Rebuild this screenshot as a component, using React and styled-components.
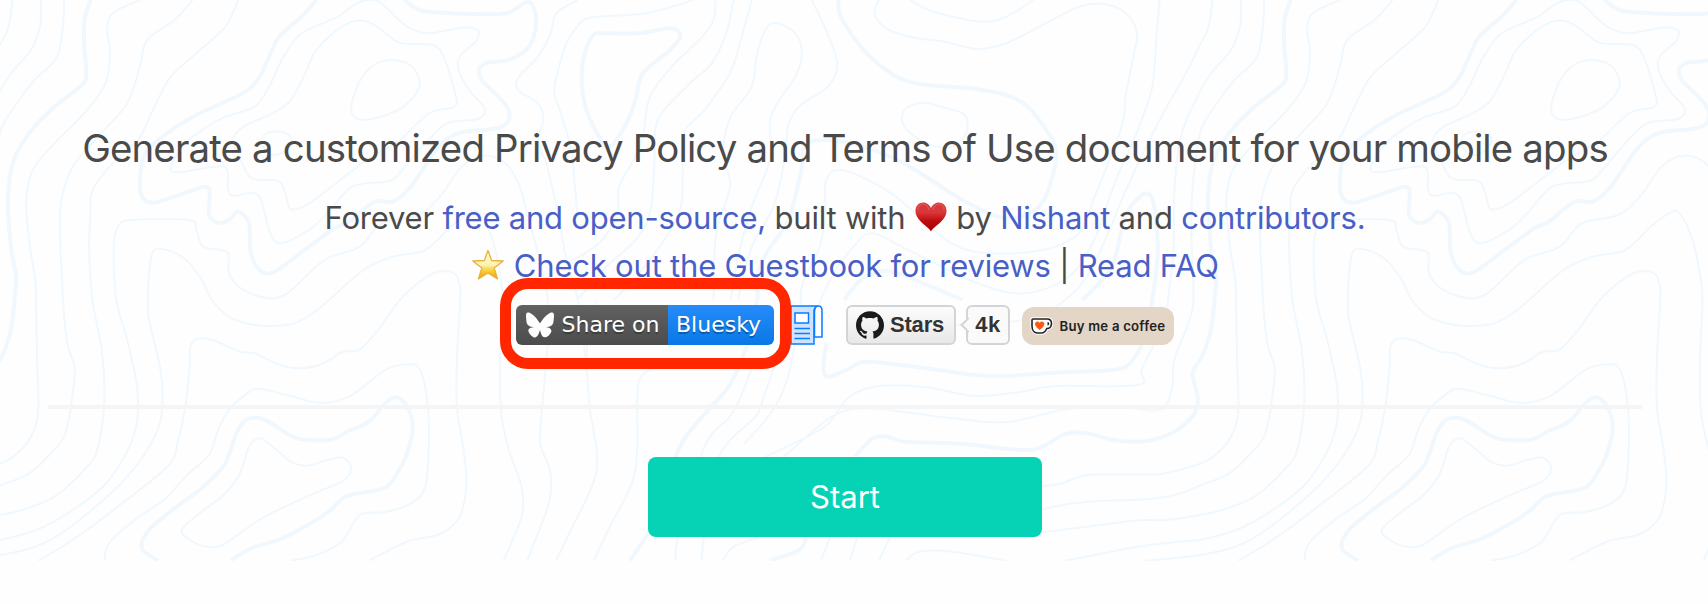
import React from 'react';
import styled, { createGlobalStyle, css } from 'styled-components';
import { FaBluesky } from 'react-icons/fa6';
import { SiGithub } from 'react-icons/si';

const GlobalStyle = createGlobalStyle`
  * { box-sizing: border-box; }
  body { margin: 0; background: #fefefe; }
`;

/* Contour lines of the topographic backdrop. Each line: [thick, closed, x, y, x, y, ...] */
const CONTOURS = [
  [0, 0, 3335, 0, 3325, 80, 3301, 135, 3262, 220, 3195, 350, 3140, 470, 3090, 590, 3040, 720, 2990, 830, 2930, 900, 2850, 950, 2700, 975, 2560, 970, 2440, 945],
  [0, 0, 113, 0, 110, 80, 85, 150, 30, 220, 0, 275, -50, 400, -70, 560, -73, 750, -88, 900, -95, 950, -126, 1030, -161, 1110, -171, 1155, -400, 1158, -490, 1175, -620, 1188, -750, 1162, -880, 1158, -965, 1190, -1033, 1280, -1195, 1370],
  [0, 0, 177, 0, 172, 90, 155, 175, 95, 240, 40, 320, 0, 400, -20, 560, -24, 700, -18, 900, -36, 980, -71, 1080, -76, 1160, -96, 1220, -131, 1232, -171, 1226, -240, 1222, -370, 1228, -530, 1266, -680, 1255, -820, 1235, -920, 1225, -1013, 1250, -1145, 1370],
  [1, 0, 250, 0, 234, 50, 231, 120, 237, 220, 225, 255, 150, 320, 80, 400, 35, 490, 22, 600, 30, 740, 44, 830, 40, 900, 28, 1000, 5, 1070, -20, 1120, -6, 1195, -18, 1245, -71, 1295, -131, 1320, -171, 1325, -240, 1320, -310, 1300, -370, 1302, -433, 1340, -490, 1350, -650, 1332, -810, 1325, -860, 1310, -900, 1315, -950, 1370],
  [0, 0, 385, 0, 310, 40, 295, 90, 303, 160, 290, 250, 240, 330, 150, 430, 90, 510, 72, 600, 80, 720, 97, 840, 99, 900, 102, 1080, 105, 1230, 85, 1310, 30, 1375, -40, 1405, -110, 1422, -171, 1423, -310, 1425, -380, 1450, -435, 1460],
  [0, 0, 530, 0, 480, 60, 405, 120, 385, 200, 350, 310, 270, 410, 200, 500, 169, 600, 165, 700, 171, 850, 173, 900, 185, 1030, 205, 1100, 200, 1180, 180, 1300, 140, 1360, 80, 1420, 0, 1457, -80, 1488, -171, 1499, -260, 1502, -350, 1510, -435, 1528],
  [0, 0, 655, 0, 620, 80, 540, 160, 470, 230, 425, 320, 380, 420, 310, 490, 255, 570, 249, 640, 245, 740, 254, 900, 280, 1050, 287, 1200, 270, 1340, 240, 1400, 150, 1490, 60, 1530, 0, 1545, -90, 1560, -171, 1561, -310, 1580, -440, 1598],
  [0, 0, 2930, 1682, 2980, 1672, 3130, 1640, 3220, 1628, 3301, 1620],
  [0, 0, 0, 1620, 100, 1590, 200, 1530, 300, 1440, 370, 1300, 378, 1170, 350, 1020, 320, 900, 313, 740, 325, 680, 360, 660, 520, 660, 540, 690, 560, 740, 625, 757, 630, 820, 670, 870, 740, 895, 790, 880, 850, 820, 900, 775, 990, 740, 1050, 670, 1150, 645, 1210, 590, 1270, 500, 1330, 467, 1390, 490, 1430, 560, 1450, 640, 1475, 740, 1507, 900, 1507, 1020, 1492, 1220, 1486, 1330, 1513, 1410, 1512, 1500, 1480, 1600, 1450, 1682],
  [0, 0, -150, 1682, 0, 1665, 120, 1630, 230, 1550, 350, 1430, 430, 1300, 447, 1200, 440, 1100, 410, 960, 407, 900, 410, 820, 420, 757, 445, 747, 500, 770, 550, 830, 583, 900, 630, 950, 700, 975, 800, 973, 860, 940, 905, 900, 1000, 810, 1080, 770, 1170, 750, 1240, 680, 1290, 640, 1320, 640, 1355, 720, 1375, 820, 1382, 900, 1375, 1100, 1380, 1250, 1400, 1350, 1435, 1460, 1437, 1540, 1410, 1620, 1385, 1682],
  [0, 0, 105, 1682, 200, 1620, 300, 1540, 460, 1400, 490, 1320, 510, 1220, 522, 1100, 525, 1035, 545, 1016, 590, 1022, 660, 1055, 700, 1060, 770, 1095, 830, 1105, 890, 1090, 940, 1057, 990, 1048, 1040, 990, 1100, 900, 1150, 850, 1200, 817, 1250, 820, 1265, 860, 1266, 900, 1257, 1080, 1257, 1220, 1275, 1350, 1283, 1450, 1265, 1550, 1210, 1602, 1120, 1625, 1015, 1682],
  [0, 0, 287, 1682, 300, 1630, 370, 1560, 450, 1500, 520, 1420, 575, 1365, 600, 1290, 630, 1230, 680, 1180, 715, 1167, 790, 1185, 880, 1209, 960, 1190, 1060, 1110, 1120, 1093, 1155, 1108, 1175, 1200, 1180, 1320, 1170, 1460, 1130, 1510, 1060, 1536, 990, 1545, 940, 1625, 870, 1665, 800, 1682],
  [1, 0, 435, 1682, 390, 1645, 410, 1590, 480, 1525, 560, 1460, 620, 1390, 650, 1300, 680, 1258, 730, 1260, 800, 1307, 840, 1319, 910, 1319, 960, 1292, 1015, 1265, 1060, 1210, 1090, 1192, 1120, 1220, 1136, 1280, 1120, 1360, 1095, 1415, 1065, 1460, 1030, 1472, 950, 1490, 910, 1530, 850, 1573, 770, 1618, 690, 1645, 635, 1682],
  [0, 1, 715, 1315, 750, 1340, 800, 1385, 845, 1397, 900, 1380, 945, 1373, 966, 1408, 940, 1445, 860, 1482, 720, 1555, 620, 1630, 575, 1641, 530, 1625, 500, 1590, 550, 1540, 620, 1480, 660, 1420, 685, 1340],
  [1, 0, 870, 0, 830, 50, 765, 115, 720, 220, 685, 268, 630, 300, 540, 345, 460, 400, 400, 460, 385, 540, 392, 592, 420, 608, 480, 590, 565, 560, 577, 590, 575, 645, 600, 668, 630, 660, 655, 635, 685, 670, 690, 760, 720, 815, 760, 812, 850, 740, 920, 685, 960, 665, 1030, 605, 1080, 605, 1130, 560, 1200, 450, 1260, 400, 1375, 382, 1402, 345, 1380, 300, 1325, 240, 1320, 205, 1345, 187, 1400, 180, 1455, 140, 1475, 70, 1465, 15, 1445, 8, 1400, 38, 1340, 43, 1200, 37, 1150, 28, 1112, 0],
  [0, 1, 930, 50, 980, 10, 1030, 0, 1060, 20, 1120, 80, 1180, 100, 1270, 83, 1315, 92, 1308, 125, 1265, 170, 1262, 210, 1290, 270, 1333, 325, 1315, 357, 1230, 370, 1170, 430, 1090, 530, 1060, 545, 970, 560, 900, 640, 850, 690, 770, 730, 740, 690, 710, 585, 640, 587, 627, 560, 625, 508, 590, 500, 490, 517, 470, 500, 510, 430, 570, 380, 620, 350, 700, 320, 740, 260, 780, 170, 830, 100],
  [0, 1, 1000, 62, 940, 80, 870, 150, 840, 220, 800, 300, 750, 340, 670, 380, 640, 420, 655, 460, 690, 533, 765, 543, 785, 580, 800, 627, 850, 610, 930, 545, 1010, 480, 1100, 420, 1180, 340, 1250, 320, 1252, 280, 1220, 170, 1190, 135, 1100, 128, 1050, 90],
  [0, 1, 1080, 180, 1130, 197, 1155, 245, 1138, 290, 1090, 333, 1010, 359, 970, 345, 970, 300, 1000, 225, 1040, 188],
  [0, 1, 720, 418, 740, 397, 780, 397, 803, 420, 780, 455, 750, 465, 727, 448],
  [0, 0, 1590, 0, 1530, 40, 1515, 100, 1480, 170, 1425, 235, 1427, 272, 1480, 310, 1495, 360, 1480, 420, 1505, 500, 1535, 640, 1560, 790, 1590, 900, 1613, 1100, 1623, 1230, 1643, 1370, 1628, 1460, 1568, 1595, 1530, 1682],
  [0, 0, 1908, 0, 1778, 40, 1628, 52, 1588, 80, 1555, 140, 1525, 265, 1540, 330, 1570, 440, 1580, 540, 1588, 640],
  [1, 1, 1628, 110, 1668, 100, 1758, 100, 1848, 85, 1871, 110, 1838, 155, 1768, 220, 1748, 300, 1723, 370, 1678, 440, 1648, 410, 1608, 310, 1602, 200],
  [0, 0, 1968, 0, 1963, 60, 1928, 115, 1848, 200, 1788, 290, 1770, 400, 1748, 470, 1703, 560, 1698, 640, 1648, 730, 1568, 785],
  [0, 0, 2018, 0, 1998, 100, 1958, 190, 1898, 250, 1810, 360, 1800, 500, 1788, 640, 1748, 720, 1668, 800, 1588, 900],
  [0, 0, 2068, 0, 2038, 120, 2008, 220, 1938, 330, 1880, 400, 1878, 520, 1868, 640, 1788, 780, 1690, 900],
  [0, 0, 1963, 900, 1970, 700, 2008, 560, 1990, 450, 2010, 350, 2068, 260, 2083, 160, 2108, 85, 2138, 70, 2188, 100, 2206, 160, 2188, 230, 2138, 310, 2118, 370, 2118, 480, 2068, 620, 2033, 760, 2010, 900],
  [0, 0, 2233, 0, 2268, 80, 2303, 190, 2278, 260, 2208, 310, 2170, 370, 2158, 480, 2128, 620, 2068, 740, 2030, 900],
  [1, 0, 2306, 0, 2313, 50, 2368, 140, 2438, 210, 2518, 250, 2668, 265, 2768, 285, 2828, 320, 2878, 390, 2903, 440, 2898, 520, 2858, 620, 2768, 655, 2648, 600, 2518, 510, 2438, 465, 2318, 425, 2220, 430, 2203, 520, 2168, 660, 2108, 760, 2083, 830, 2083, 900, 2060, 1020, 2028, 1110, 1998, 1170, 1908, 1280, 1858, 1370, 1808, 1550, 1733, 1682],
  [0, 1, 2538, 308, 2588, 320, 2653, 345, 2658, 400, 2618, 440, 2548, 430, 2488, 380, 2488, 330],
  [0, 0, 2418, 0, 2406, 40, 2438, 85, 2508, 112, 2598, 125, 2688, 147, 2768, 130, 2868, 75, 2968, 20, 3038, 12, 3098, 40, 3128, 100, 3118, 170, 3098, 280, 3088, 370, 3048, 490, 3008, 600, 2968, 700, 2868, 750, 2718, 760, 2618, 730, 2518, 640, 2438, 570, 2318, 510, 2273, 540, 2270, 640, 2255, 740, 2208, 850, 2200, 940, 2168, 1130, 2120, 1240, 2048, 1330],
  [0, 0, 2503, 0, 2568, 35, 2698, 65, 2768, 50, 2843, 0],
  [0, 0, 3190, 0, 3180, 130, 3170, 260, 3130, 390, 3070, 540, 3010, 720, 2940, 830, 2820, 880, 2690, 850, 2490, 745, 2398, 700, 2348, 740, 2288, 830, 2250, 920],
  [1, 0, 2323, 900, 2368, 840, 2438, 812, 2518, 840, 2648, 900],
  [1, 0, 2978, 900, 3058, 800, 3095, 650, 3135, 590, 3160, 582, 3175, 620, 3185, 750, 3170, 900, 3150, 1010, 3108, 1090, 3058, 1110, 2898, 1118, 2718, 1128, 2548, 1105, 2388, 1085, 2338, 1105, 2283, 1130, 2265, 1110, 2273, 1030],
  [0, 0, 1613, 1100, 1618, 1010, 1640, 900],
  [0, 0, 1808, 1100, 1763, 1130, 1753, 1200, 1753, 1350, 1738, 1450, 1678, 1580, 1633, 1682],
  [0, 0, 2068, 1105, 2038, 1190, 2008, 1250, 1938, 1340, 1868, 1600, 1858, 1682],
  [0, 0, 2128, 1105, 2098, 1200, 2078, 1250, 1978, 1370, 1938, 1600, 1930, 1682],
  [0, 0, 1988, 1682, 2018, 1640, 2088, 1612],
  [1, 0, 2118, 1682, 2198, 1650, 2218, 1612],
  [0, 0, 2258, 1682, 2283, 1612],
  [0, 0, 2338, 1682, 2358, 1612],
  [0, 0, 2418, 1682, 2448, 1612],
  [0, 0, 2493, 1682, 2528, 1655, 2618, 1655, 2768, 1682],
];

const TILE_WIDTH = 1200;
const UNIT_X = 1 / 2.751;
const UNIT_Y = 1 / 3;

function contourPath([, closed, ...flat]) {
  const pts = [];
  for (let i = 0; i < flat.length; i += 2) pts.push([flat[i] * UNIT_X, flat[i + 1] * UNIT_Y]);
  const n = pts.length;
  const at = (i) => (closed ? pts[(i + n) % n] : pts[Math.max(0, Math.min(n - 1, i))]);
  const f = (v) => v.toFixed(1);
  let d = `M${f(pts[0][0])} ${f(pts[0][1])}`;
  for (let i = 0; i < (closed ? n : n - 1); i++) {
    const [a, b, c, e] = [at(i - 1), at(i), at(i + 1), at(i + 2)];
    d += `C${f(b[0] + (c[0] - a[0]) / 6)} ${f(b[1] + (c[1] - a[1]) / 6)} ${f(c[0] - (e[0] - b[0]) / 6)} ${f(c[1] - (e[1] - b[1]) / 6)} ${f(c[0])} ${f(c[1])}`;
  }
  return d;
}

const Page = styled.main`
  position: relative;
  width: 1708px;
  height: 604px;
  overflow: hidden;
  color: #4a4a4a;
  font-family: Inter, 'Liberation Sans', sans-serif;
`;

const Backdrop = styled.svg`
  position: absolute;
  top: 0;
  left: 0;
  fill: none;
  stroke: #f0f8fe;
`;

const Hero = styled.section`
  position: relative;
  width: 1690px;
  padding: 118px 48px 0;
  display: flex;
  flex-direction: column;
  align-items: center;
`;

const Title = styled.h1`
  margin: 0;
  font-size: 38.4px;
  font-weight: 400;
  line-height: 60px;
  letter-spacing: -0.83px;
  white-space: nowrap;
`;

const Line = styled.p`
  margin: ${(p) => (p.$first ? '16px' : '0')} 0 0;
  height: 48px;
  font-size: 31px;
  line-height: 48px;
  letter-spacing: ${(p) => p.$tracking};
  white-space: nowrap;
`;

const Link = styled.a`
  color: #485fc7;
`;

const Emoji = styled.svg`
  width: 34px;
  height: 32px;
  vertical-align: -4px;
`;

const Badges = styled.div`
  margin-top: 15px;
  height: 40px;
  display: flex;
  align-items: flex-end;
`;

const ShareBadge = styled.div`
  position: relative;
  display: flex;
  width: 258px;
  height: 40px;
  font: 22px/40px 'DejaVu Sans', sans-serif;
  color: #fff;
  text-shadow: 0 2px 0 rgba(1, 1, 1, 0.3);
  white-space: nowrap;
`;

const ShareLabel = styled.span`
  width: 152px;
  padding-left: 10px;
  display: flex;
  align-items: center;
  gap: 7.5px;
  border-radius: 6px 0 0 6px;
  background: linear-gradient(#616161, #4c4c4c);

  svg { width: 28px; height: 28px; flex: none; }
`;

const ShareTarget = styled.span`
  width: 106px;
  padding-left: 8px;
  border-radius: 0 6px 6px 0;
  background: linear-gradient(#268bfa, #0878e6);
`;

const Highlight = styled.span`
  position: absolute;
  z-index: 2;
  inset: -27.5px -17px -24px -16.5px;
  border: 11.5px solid #ff2600;
  border-radius: 28px;
`;

const NewsIcon = styled.svg`
  width: 33px;
  height: 40px;
  margin: 0 23px 0 16px;
`;

const githubBox = css`
  height: 40px;
  display: flex;
  align-items: center;
  border: 2px solid #d4d4d4;
  border-radius: 6px;
  color: #333;
  font: bold 22px/36px 'Liberation Sans', sans-serif;
`;

const StarsButton = styled.div`
  ${githubBox}
  width: 110px;
  padding-left: 8px;
  gap: 6px;
  background: linear-gradient(#fcfcfc, #e8e8e8);
  letter-spacing: -0.2px;

  svg { width: 28px; height: 28px; color: #1b1b1b; }
`;

const StarsCount = styled.div`
  ${githubBox}
  position: relative;
  width: 44px;
  margin: 0 12px 0 10px;
  justify-content: center;
  background: #fafafa;
  letter-spacing: 0.6px;
`;

const CountArrow = styled.svg`
  position: absolute;
  left: -8px;
  top: 10px;
  width: 9px;
  height: 16px;
`;

const CoffeeBadge = styled.div`
  width: 152px;
  height: 38px;
  padding-left: 8px;
  display: flex;
  align-items: center;
  gap: 6.5px;
  border-radius: 12px;
  background: #e3d6c6;
  color: #222;
  font: 600 13.2px/36px Inter, sans-serif;
  letter-spacing: 0.22px;
  white-space: nowrap;
`;

const Divider = styled.hr`
  width: 1594px;
  height: 4px;
  margin: 60px 0 48px;
  border: 0;
  background: #f5f5f5;
`;

const StartButton = styled.button`
  width: 394px;
  height: 80px;
  padding: 0;
  border: 0;
  border-radius: 8px;
  background: #06d3b5;
  color: #fff;
  font: 400 31px/80px Inter, sans-serif;
`;

function Topography() {
  return (
    <Backdrop width="1708" height="561" viewBox="0 0 1708 561">
      <defs>
        <g id="contours">
          {CONTOURS.map((line, i) => (
            <path key={i} d={contourPath(line)} strokeWidth={line[0] ? 4 : 2} />
          ))}
        </g>
      </defs>
      {[-1, 0, 1].map((n) => (
        <use key={n} href="#contours" x={n * TILE_WIDTH} />
      ))}
    </Backdrop>
  );
}

function Heart() {
  return (
    <Emoji viewBox="0 0 34 32">
      <defs>
        <linearGradient id="heart" x1="0" y1="0" x2="0" y2="1">
          <stop offset="0" stopColor="#d93a3c" />
          <stop offset=".35" stopColor="#d9363a" />
          <stop offset=".65" stopColor="#bd0a0a" />
          <stop offset="1" stopColor="#a80000" />
        </linearGradient>
      </defs>
      <path d="M17 30.5C14.500 25.500 1.500 19.500 1.500 10C1.500 5 4.800 1.500 9.100 1.500C12.800 1.500 15.800 4 17 7C18.200 4 21.200 1.500 24.900 1.500C29.200 1.500 32.500 5 32.500 10C32.500 19.500 19.500 25.500 17 30.500Z" fill="url(#heart)" />
      <path d="M4 9C4 5 6.500 3 9.200 3S14 5 15 9M19 9C20 5 22 3 24.800 3S30 5 30 9" fill="none" stroke="#f08080" strokeOpacity=".55" />
    </Emoji>
  );
}

function Star() {
  return (
    <Emoji viewBox="0 0 34 32">
      <defs>
        <linearGradient id="star" x1="0" y1="0" x2="0" y2="1">
          <stop offset="0" stopColor="#fff6d0" />
          <stop offset=".5" stopColor="#fdf3b5" />
          <stop offset=".72" stopColor="#f9ce30" />
          <stop offset="1" stopColor="#e99a18" />
        </linearGradient>
      </defs>
      <path d="M17 1.500L20.700 11.500L32.200 12L23.200 19.100L26.600 30L17 23.900L7.400 30L10.800 19.100L1.800 12L13.300 11.500Z" fill="url(#star)" stroke="#e8b13c" strokeWidth="1.300" strokeLinejoin="round" />
    </Emoji>
  );
}

export default function App() {
  return (
    <Page>
      <GlobalStyle />
      <Topography />
      <Hero>
        <Title>Generate a customized Privacy Policy and Terms of Use document for your mobile apps</Title>
        <Line $first $tracking="-0.22px">
          Forever <Link>free and open-source,</Link> built with <Heart /> by <Link>Nishant</Link> and{' '}
          <Link>contributors.</Link>
        </Line>
        <Line $tracking="-0.2px">
          <Star /> <Link>Check out the Guestbook for reviews</Link> | <Link>Read FAQ</Link>
        </Line>
        <Badges>
          <ShareBadge>
            <ShareLabel><FaBluesky />Share on</ShareLabel>
            <ShareTarget>Bluesky</ShareTarget>
            <Highlight />
          </ShareBadge>
          <NewsIcon viewBox="0 0 33 40" fill="#cfe3ff" stroke="#087cff" strokeWidth="1.5">
            <path d="M1 1H26.500L24 5V39H1Z" />
            <path d="M24.500 7C24.500 3 26 1 28.500 1S32 3 32 6V32H24.500Z" fill="#fff" />
            <path d="M5 8H18.500V18H5Z" fill="#fff" />
            <path d="M4.500 23.500H20M4.500 28.500H20M4.500 33.500H20" />
          </NewsIcon>
          <StarsButton><SiGithub />Stars</StarsButton>
          <StarsCount>
            <CountArrow viewBox="0 0 9 16">
              <path d="M9 1L1.500 8L9 15" fill="#fafafa" stroke="#d4d4d4" strokeWidth="2" />
              <path d="M9 2.500V13.500" stroke="#fafafa" strokeWidth="3" />
            </CountArrow>
            4k
          </StarsCount>
          <CoffeeBadge>
            <svg width="23" height="18" viewBox="0 0 23 18">
              <path d="M3 2H17C20.500 2 21.500 4 21.500 6.500S20 11.500 16.800 11.500C15.500 14.500 14 16 11.500 16H7.500C4 16 2 13 2 9V3Q2 2 3 2Z" fill="#fff" stroke="#fff" strokeWidth="3.500" />
              <path d="M3 2H17C20.500 2 21.500 4 21.500 6.500S20 11.500 16.800 11.500C15.500 14.500 14 16 11.500 16H7.500C4 16 2 13 2 9V3Q2 2 3 2Z" fill="#fff" stroke="#222" strokeWidth="1.600" />
              <path d="M17.500 5V8.500C19.800 8.500 19.800 5 17.500 5Z" fill="#222" />
              <path d="M9.700 13C8 11.500 5 9.500 5 7C5 4.300 8.400 3.700 9.700 6C11 3.700 14.400 4.300 14.400 7C14.400 9.500 11.400 11.500 9.700 13Z" fill="#ff5a16" />
            </svg>
            Buy me a coffee
          </CoffeeBadge>
        </Badges>
        <Divider />
        <StartButton>Start</StartButton>
      </Hero>
    </Page>
  );
}
